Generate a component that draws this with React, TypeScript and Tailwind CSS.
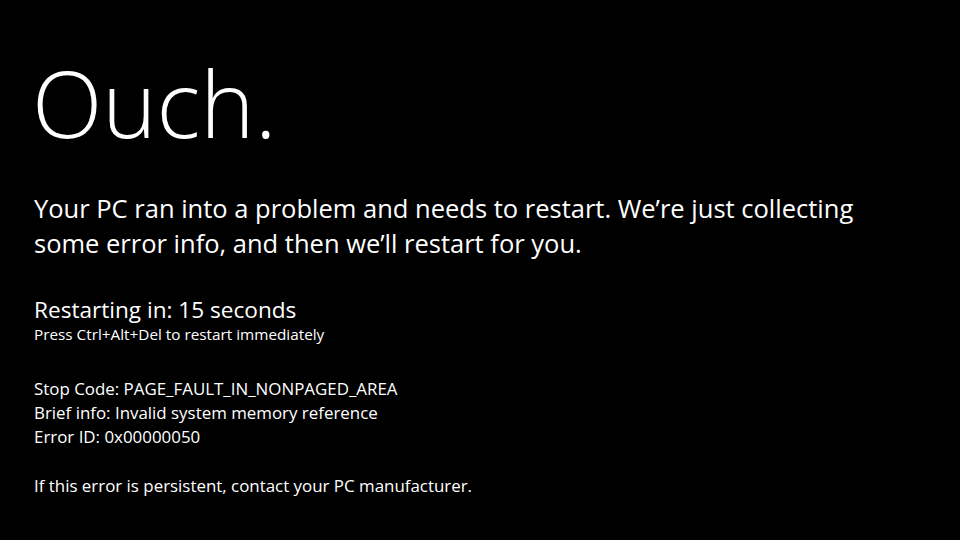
export default function App() {
  return (
    <div
      className="w-[960px] h-[540px] bg-black text-white pl-[34px] pt-[48px] overflow-hidden"
      style={{ fontFamily: '"Open Sans", "Noto Sans", sans-serif' }}
    >
      {/* big title */}
      <h1 className="text-[92px] font-light leading-[110px] -ml-[2px]">Ouch.</h1>

      {/* main message */}
      <p className="mt-[33px] text-[25.5px] leading-[35px] w-[900px]">
        Your PC ran into a problem and needs to restart. We’re just collecting
        <br />
        some error info, and then we’ll restart for you.
      </p>

      {/* countdown */}
      <div className="mt-[35px]">
        <p className="text-[22.6px] leading-[28px]">Restarting in: 15 seconds</p>
        <p className="text-[15.3px] leading-[20px]">Press Ctrl+Alt+Del to restart immediately</p>
      </div>

      {/* details */}
      <div className="mt-[33px] text-[16.9px] leading-[24px]">
        <p>Stop Code: PAGE_FAULT_IN_NONPAGED_AREA</p>
        <p>Brief info: Invalid system memory reference</p>
        <p>Error ID: 0x00000050</p>
        <p className="mt-[25px]">If this error is persistent, contact your PC manufacturer.</p>
      </div>
    </div>
  );
}
